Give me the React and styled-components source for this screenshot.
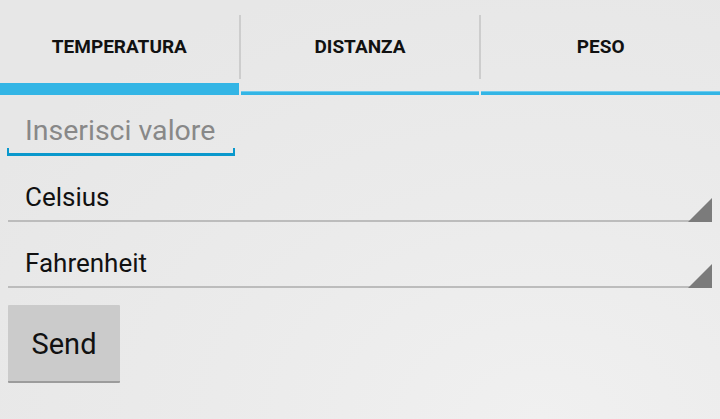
import React from 'react';
import styled, { createGlobalStyle } from 'styled-components';

const GlobalStyle = createGlobalStyle`
  html, body {
    margin: 0;
    padding: 0;
  }
  body {
    font-family: Roboto, "Noto Sans", "Liberation Sans", sans-serif;
    background: #e8e8e8;
  }
`;

const Screen = styled.div`
  width: 720px;
  height: 419px;
  overflow: hidden;
  background: radial-gradient(ellipse 90% 110% at 75% 100%, #f0f0f0 0%, #ebebeb 50%, #e7e7e7 100%);
`;

const TabBar = styled.div`
  display: flex;
  height: 95px;
`;

const Tab = styled.div`
  flex: 1;
  display: flex;
  flex-direction: column;
`;

const TabLabel = styled.div`
  height: 73px;
  padding-top: 10px;
  display: flex;
  align-items: center;
  justify-content: center;
  font-size: 19px;
  font-weight: 700;
  color: #111;
  text-transform: uppercase;
`;

const Indicator = styled.div`
  margin-top: auto;
  height: ${p => (p.$active ? 12 : 3)}px;
  background: #33b5e5;
  border-top: ${p => (p.$active ? 'none' : '1px solid #6fcbee')};
`;

const TabDivider = styled.div`
  width: 2px;
  height: 64px;
  margin-top: 15px;
  background: #cdcdcd;
`;

const Form = styled.div`
  padding: 0 8px;
`;

const InputField = styled.div`
  width: 228px;
  margin-left: -1px;
  padding-top: 20px;
`;

const Placeholder = styled.div`
  padding-left: 18px;
  font-size: 28.5px;
  line-height: 32px;
  color: #888;
`;

const InputLine = styled.div`
  margin-top: 1px;
  height: 5px;
  border: 2px solid #0a98cc;
  border-top: none;
  border-bottom-width: 3px;
`;

const SpinnerRow = styled.div`
  display: flex;
  justify-content: space-between;
  align-items: flex-end;
  padding: 25px 0 7px 17px;
  border-bottom: 2px solid #bcbcbc;
`;

const SpinnerText = styled.div`
  font-size: 26px;
  line-height: 32px;
  color: #111;
`;

const Corner = styled.div`
  width: 24px;
  height: 24px;
  margin-bottom: -9px;
  background: #7b7b7b;
  clip-path: polygon(100% 0, 100% 100%, 0 100%);
`;

const Button = styled.button`
  display: block;
  margin-top: 17px;
  width: 112px;
  height: 78px;
  padding: 2px 0 0;
  border: none;
  border-bottom: 2px solid #9c9c9c;
  border-radius: 1px;
  background: #cbcbcb;
  font-family: inherit;
  font-size: 29px;
  color: #111;
`;

const tabs = ['Temperatura', 'Distanza', 'Peso'];
const units = ['Celsius', 'Fahrenheit'];

export default function App() {
  return (
    <Screen>
      <GlobalStyle />
      <TabBar>
        {tabs.map((t, i) => (
          <React.Fragment key={t}>
            {i > 0 && <TabDivider />}
            <Tab>
              <TabLabel>{t}</TabLabel>
              <Indicator $active={i === 0} />
            </Tab>
          </React.Fragment>
        ))}
      </TabBar>
      <Form>
        <InputField>
          <Placeholder>Inserisci valore</Placeholder>
          <InputLine />
        </InputField>
        {units.map(u => (
          <SpinnerRow key={u}>
            <SpinnerText>{u}</SpinnerText>
            <Corner />
          </SpinnerRow>
        ))}
        <Button>Send</Button>
      </Form>
    </Screen>
  );
}
